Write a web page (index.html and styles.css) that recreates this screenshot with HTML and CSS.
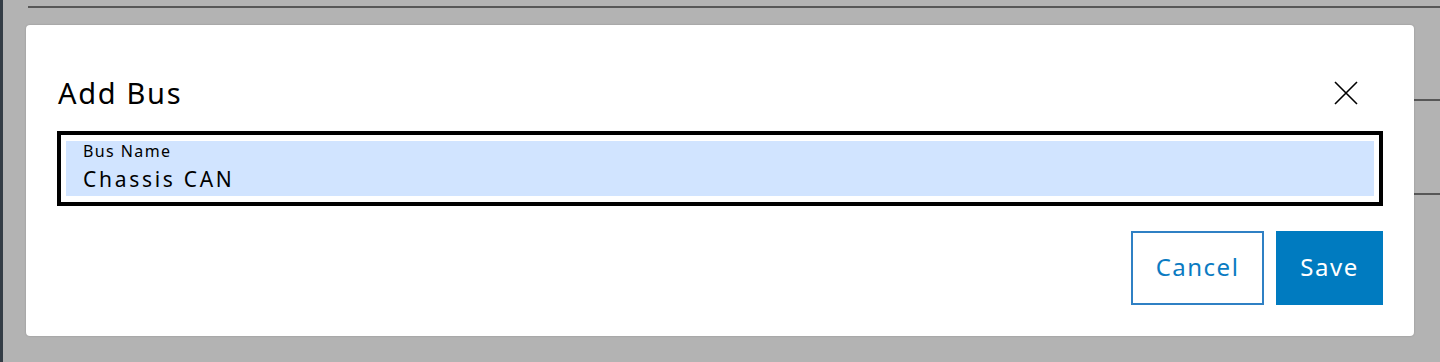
FILE: index.html
```html
<!DOCTYPE html>
<html lang="en">
<head>
  <meta charset="UTF-8" />
  <meta name="viewport" content="width=device-width, initial-scale=1.0">
  <title>Add Bus</title>
  <link rel="stylesheet" href="styles.css">
</head>
<body>
  <div class="page">
    <div class="sidebar"></div>
    <div class="content">
      <div class="rule rule-top"></div>
      <div class="rule rule-a"></div>
      <div class="rule rule-b"></div>
    </div>
  </div>

  <!-- Add Bus dialog -->
  <div class="dialog">
    <div class="dialog-header">
      <h1 class="dialog-title">Add Bus</h1>
      <button class="close-btn" aria-label="Close">
        <svg width="24" height="24" viewBox="0 0 24 24">
          <path d="M1 1 L23 23 M23 1 L1 23" stroke="#000" stroke-width="1.6" fill="none" />
        </svg>
      </button>
    </div>

    <div class="field">
      <div class="field-inner">
        <label for="busName">Bus Name</label>
        <input id="busName" type="text" value="Chassis CAN" />
      </div>
    </div>

    <div class="dialog-actions">
      <button class="btn btn-secondary">Cancel</button>
      <button class="btn btn-primary">Save</button>
    </div>
  </div>
</body>
</html>
```

FILE: styles.css
```css
body {
  margin: 0;
  background: #b3b3b3;
  font-family: "Noto Sans", "Open Sans", sans-serif;
  height: 362px;
  overflow: hidden;
}

.page {
  display: flex;
  height: 362px;
}

.sidebar {
  width: 3px;
  background: #343d46;
}

.content {
  flex: 1;
  padding: 6px 0 0 25px;
}

.rule {
  height: 2px;
  background: #575757;
}

.rule-a {
  margin-top: 91px;
}

.rule-b {
  margin-top: 92px;
}

.dialog {
  position: absolute;
  left: 26px;
  top: 25px;
  width: 1388px;
  height: 311px;
  box-sizing: border-box;
  padding: 50px 31px 0 31px;
  background: #fff;
  border-radius: 4px;
  box-shadow: 0 0 2px rgba(0,0,0,0.2);
}

.dialog-header {
  display: flex;
  align-items: center;
  justify-content: space-between;
  height: 36px;
  margin-bottom: 20px;
}

.dialog-title {
  margin: 0 0 0 1px;
  font-size: 29px;
  font-weight: 400;
  line-height: 36px;
  letter-spacing: 1.7px;
  color: #000;
}

.close-btn {
  width: 24px;
  height: 24px;
  padding: 0;
  margin-right: 25px;
  border: none;
  background: none;
  cursor: pointer;
}

.close-btn svg {
  display: block;
}

.field {
  border: 4px solid #000;
  padding: 6px 5px;
}

.field-inner {
  display: flex;
  flex-direction: column;
  height: 55px;
  box-sizing: border-box;
  padding: 1px 17px 0;
  background: #d1e4ff;
}

.field-inner label {
  font-size: 16px;
  line-height: 18px;
  letter-spacing: 1.4px;
  color: #000;
}

.field-inner input {
  border: none;
  outline: none;
  padding: 0;
  margin: 5px 0 0;
  background: transparent;
  font-family: inherit;
  font-size: 21px;
  line-height: 28px;
  height: 28px;
  letter-spacing: 2.7px;
  color: #000;
}

.dialog-actions {
  display: flex;
  justify-content: flex-end;
  gap: 12px;
  margin-top: 25px;
}

.btn {
  height: 74px;
  padding: 0 0 4px;
  font-family: inherit;
  font-size: 24px;
  letter-spacing: 1.5px;
  cursor: pointer;
  box-sizing: border-box;
}

.btn-secondary {
  width: 133px;
  background: #fff;
  color: #0a7bc2;
  border: 2px solid #2f80c4;
}

.btn-primary {
  width: 107px;
  background: #007bc0;
  color: #fff;
  border: none;
}
```
